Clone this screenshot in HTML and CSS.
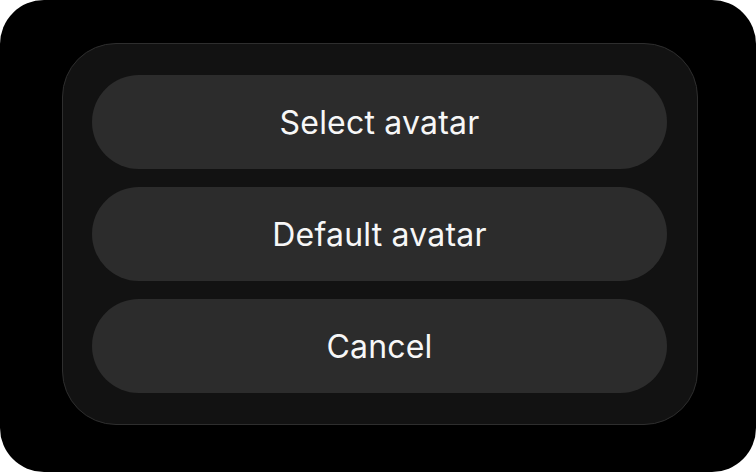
FILE: index.html
```html
<!DOCTYPE html>
<html lang="en">
<head>
<meta charset="utf-8">
<title>Avatar</title>
<link rel="stylesheet" href="styles.css">
</head>
<body>
<div class="screen">
  <div class="sheet">
    <button class="action">Select avatar</button>
    <button class="action">Default avatar</button>
    <button class="action">Cancel</button>
  </div>
</div>
</body>
</html>
```

FILE: styles.css
```css
html, body {
  margin: 0;
  padding: 0;
  background: #ffffff;
}
.screen {
  width: 756px;
  height: 472px;
  background: #000000;
  border-radius: 44px;
  display: flex;
  align-items: flex-start;
  justify-content: flex-start;
  padding: 43px 0 0 62px;
  box-sizing: border-box;
}
.sheet {
  width: 636px;
  height: 382px;
  box-sizing: border-box;
  background: #121212;
  border: 1px solid #2e2e2e;
  border-radius: 54px;
  padding: 31px 30px 31px 29px;
  display: flex;
  flex-direction: column;
  gap: 18px;
}
.action {
  height: 94px;
  width: 100%;
  border: none;
  border-radius: 47px;
  background: #2c2c2c;
  color: #f7f7f7;
  font-family: Inter, "Noto Sans", sans-serif;
  font-size: 32px;
  font-weight: 400;
  letter-spacing: 0.2px;
  padding: 0;
  margin: 0;
}
```
